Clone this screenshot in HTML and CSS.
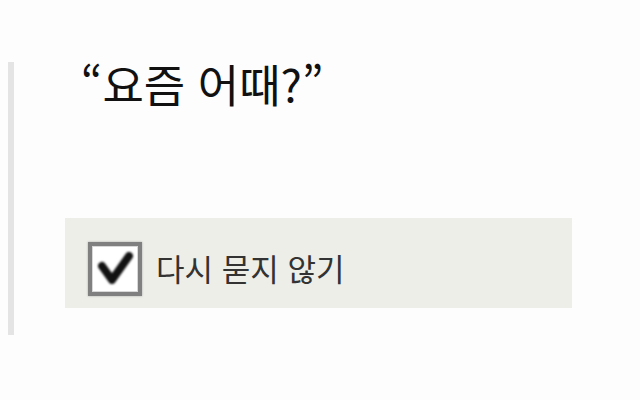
FILE: index.html
```html
<!DOCTYPE html>
<html lang="ko">
<head>
  <meta charset="UTF-8" />
  <title>요즘 어때?</title>
  <link rel="stylesheet" href="styles.css">
</head>
<body>
  <div class="dialog">
    <h1 class="question">“요즘 어때?”</h1>
    <div class="option">
      <span class="checkbox">
        <svg viewBox="0 0 46 46" width="46" height="46">
          <path d="M10 20 L20 34 L37 10" fill="none" stroke="#111" stroke-width="8" stroke-linecap="round" stroke-linejoin="round"/>
        </svg>
      </span>
      <span class="label">다시 묻지 않기</span>
    </div>
  </div>
</body>
</html>
```

FILE: styles.css
```css
* {
  box-sizing: border-box;
}
html, body {
  margin: 0;
  padding: 0;
  height: 100%;
  background-color: #fdfdfd;
  font-family: "Noto Sans CJK KR", "Noto Sans", sans-serif;
}
.dialog {
  display: flex;
  flex-direction: column;
  align-items: flex-start;
  margin: 62px 0 0 8px;
  height: 273px;
  border-left: 6px solid #e4e4e4;
  padding: 0 0 0 51px;
}
.question {
  margin: -6px 0 0 16px;
  font-size: 45px;
  font-weight: 400;
  line-height: 56px;
  color: #111;
}
.option {
  margin-top: 106px;
  width: 507px;
  height: 90px;
  background-color: #eeeee9;
  display: flex;
  align-items: center;
  padding: 12px 0 0 23px;
  gap: 14px;
}
.checkbox {
  width: 54px;
  height: 54px;
  border: 4px solid #808080;
  background-color: #fff;
  box-shadow: 0 0 2px rgba(0, 0, 0, 0.3), inset 0 0 0 1px #d8d8d8;
  display: flex;
  align-items: center;
  justify-content: center;
}
.checkbox svg {
  filter: blur(0.8px);
}
.label {
  font-size: 31px;
  color: #333;
  margin-top: -4px;
}
```
